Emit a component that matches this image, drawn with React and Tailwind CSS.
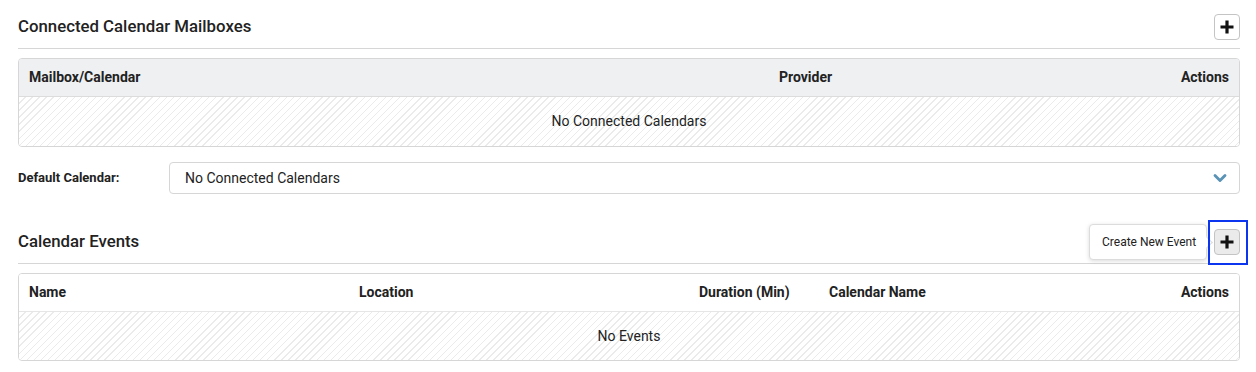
import { ChevronDown } from 'lucide-react';

const stripes =
    'bg-[repeating-linear-gradient(135deg,#ffffff_0px,#ffffff_4px,#ebebeb_4px,#ebebeb_5px)]';

function PlusIcon() {
    return (
        <svg className="w-[14px] h-[14px]" viewBox="0 0 14 14" fill="none" stroke="#111" strokeWidth="3.2">
            <path d="M7 0.5v13M0.5 7h13" />
        </svg>
    );
}

function SectionHeader({ title, children }) {
    return (
        <div className="flex items-center justify-between pb-2 border-b border-[#d6d6d6]">
            <h2 className="text-[16.8px] font-medium text-[#222]">{title}</h2>
            {children}
        </div>
    );
}

export default function App() {
    return (
        <div className="w-[1256px] h-[372px] bg-white pl-[18px] pr-[16px] pt-[14px] text-[#222] font-['Roboto',sans-serif]">
            {/* Connected mailboxes */}
            <SectionHeader title="Connected Calendar Mailboxes">
                <button className="w-[26px] h-[26px] flex items-center justify-center rounded-[4px] border border-[#c4c4c4] bg-white">
                    <PlusIcon />
                </button>
            </SectionHeader>

            <div className="mt-[9px] rounded-[4px] border border-[#d6d6d6] overflow-hidden">
                <div className="grid grid-cols-[750px_1fr_auto] items-center h-[38px] pl-[10px] pr-[10px] bg-[#eff0f2] border-b border-[#dcdcdc] text-[14px] font-bold">
                    <div>Mailbox/Calendar</div>
                    <div>Provider</div>
                    <div>Actions</div>
                </div>
                <div className={`h-[49px] flex items-center justify-center text-[14px] ${stripes}`}>
                    No Connected Calendars
                </div>
            </div>

            {/* Default calendar */}
            <div className="mt-[15px] flex items-center">
                <label className="w-[151px] text-[13px] font-bold">Default Calendar:</label>
                <div className="flex-1 h-[32px] flex items-center justify-between pl-[15px] pr-[9px] rounded-[4px] border border-[#d6d6d6] text-[14px]">
                    <span>No Connected Calendars</span>
                    <ChevronDown size={20} strokeWidth={3.4} color="#5b93b6" />
                </div>
            </div>

            {/* Calendar events */}
            <div className="mt-[35px]">
                <SectionHeader title="Calendar Events">
                    <div className="relative">
                        <div className="absolute right-[33px] top-[-5px] w-[118px] h-[36px] flex items-center pl-[12px] rounded-[4px] border border-[#dcdcdc] bg-white shadow-[0_1px_4px_rgba(0,0,0,0.15)] text-[12px] whitespace-nowrap">
                            Create New Event
                            <span className="absolute right-[-5px] top-[13px] w-[9px] h-[9px] rotate-45 bg-white border-t border-r border-[#dcdcdc]" />
                        </div>
                        <div className="absolute left-[-6px] top-[-9px] w-[40px] h-[45px] border-2 border-[#0b35ee]" />
                        <button className="w-[26px] h-[26px] flex items-center justify-center rounded-[4px] border border-[#c4c4c4] bg-[#ebebeb]">
                            <PlusIcon />
                        </button>
                    </div>
                </SectionHeader>
            </div>

            <div className="mt-[9px] rounded-[4px] border border-[#d6d6d6] overflow-hidden">
                <div className="grid grid-cols-[330px_340px_130px_1fr_auto] items-center h-[38px] pl-[10px] pr-[10px] bg-white border-b border-[#e6e6e6] text-[14px] font-bold">
                    <div>Name</div>
                    <div>Location</div>
                    <div>Duration (Min)</div>
                    <div>Calendar Name</div>
                    <div>Actions</div>
                </div>
                <div className={`h-[48px] flex items-center justify-center text-[14px] ${stripes}`}>
                    No Events
                </div>
            </div>
        </div>
    );
}
